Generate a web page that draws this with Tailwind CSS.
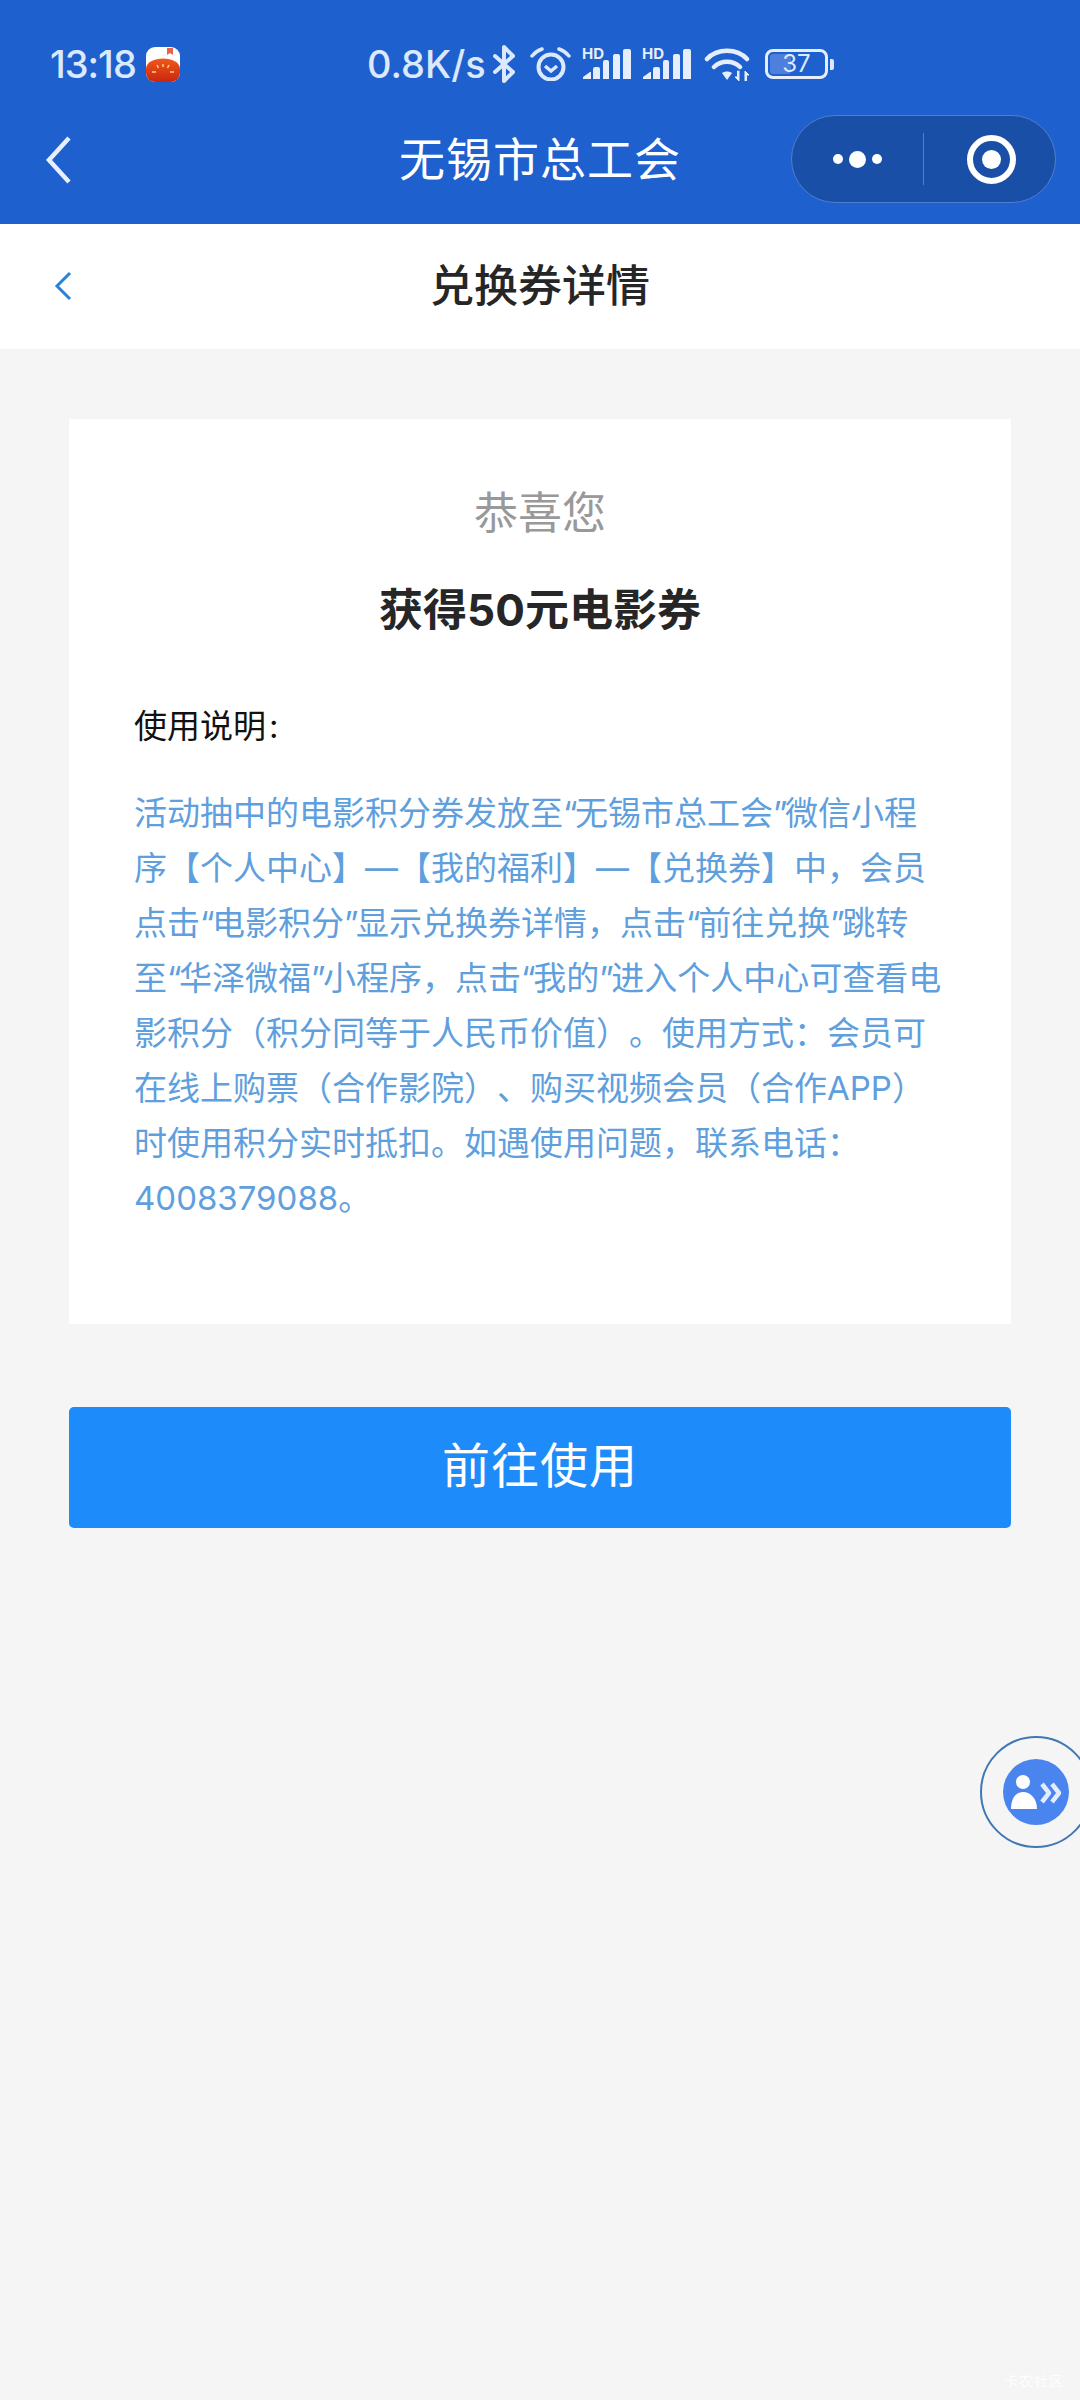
<!DOCTYPE html>
<html lang="zh-CN">
<head>
<meta charset="utf-8">
<script src="https://cdn.jsdelivr.net/npm/@tailwindcss/browser@4"></script>
<title>兑换券详情</title>
</head>
<body class="m-0 bg-[#f5f5f5]">
<div class="relative w-[1080px] h-[2400px] overflow-hidden bg-[#f5f5f5] font-['Inter','Noto_Sans_CJK_SC',sans-serif] [text-spacing-trim:space-all]">
  <div class="h-[224px] bg-[#1f60cf] flex flex-col">
    <div class="h-[112px] pl-[50px] pt-[16px] flex items-center text-[#dce8fb]">
      <span class="text-[38px] leading-none font-medium w-[90px] tracking-[-1px]">13:18</span>
      <svg class="ml-[6px]" width="34" height="35" viewBox="0 0 34 35"><defs><linearGradient id="tomato" x1="0" y1="0" x2="0" y2="1"><stop offset="0" stop-color="#f0591b"/><stop offset="1" stop-color="#c9250f"/></linearGradient></defs><rect width="34" height="35" rx="9" fill="#fff"/><path d="M0 22C0 8 34 8 34 22v4a9 9 0 0 1-9 9H9a9 9 0 0 1-9-9z" fill="url(#tomato)"/><path d="M21 1h6v7l-3-2-3 2z" fill="#e4654a"/><path d="M17 17v3M11 18l1.500 3M23 18l-1.500 3M6 25h4M24 25h4" stroke="#ffd27a" stroke-width="1.500"/></svg>
      <span class="ml-[187px] w-[117px] text-[38px] leading-none font-medium whitespace-nowrap">0.8K/s</span>
      <svg class="ml-[9px]" width="22" height="38" viewBox="0 0 22 38" fill="none" stroke="#dce8fb" stroke-width="4" stroke-linejoin="round" stroke-linecap="round"><path d="M2 11l18 16-9 9V2l9 9L2 27"/></svg>
      <svg class="ml-[15px]" width="41" height="34" viewBox="0 0 41 34" fill="none" stroke="#dce8fb" stroke-width="4"><circle cx="21" cy="20" r="12.500"/><path d="M15 19l6 5 6-5" stroke-width="3.500"/><path d="M2 9Q6 4 12 2M39 9Q35 4 29 2" stroke-width="3.500" stroke-linecap="round"/></svg>
      <svg class="ml-[11px]" width="50" height="38" viewBox="0 0 50 38" fill="#e6eefc"><text x="0" y="14" font-size="15" font-weight="700" font-family="Inter">HD</text><path d="M1 34v-2l7-5h1v7zM11 34V24q0-2 2-2h3q2 0 2 2v10zM21 34V17q0-2 2-2h2q2 0 2 2v17zM31 34V11q0-2 2-2h3q2 0 2 2v23zM41 34V6q0-2 2-2h4q2 0 2 2v28z"/></svg>
      <svg class="ml-[10px]" width="50" height="38" viewBox="0 0 50 38" fill="#e6eefc"><text x="0" y="14" font-size="15" font-weight="700" font-family="Inter">HD</text><path d="M1 34v-2l7-5h1v7zM11 34V24q0-2 2-2h3q2 0 2 2v10zM21 34V17q0-2 2-2h2q2 0 2 2v17zM31 34V11q0-2 2-2h3q2 0 2 2v23zM41 34V6q0-2 2-2h4q2 0 2 2v28z"/></svg>
      <svg class="ml-[12px]" width="46" height="34" viewBox="0 0 46 34" fill="none" stroke="#e6eefc" stroke-width="4.500" stroke-linecap="round"><path d="M3 12C13 1 33 1 43 12M10 20c7-7 19-7 26 0"/><path d="M18 26c3-2 7-2 10 0l-5 7z" fill="#e6eefc" stroke="none"/><path d="M33.500 24v6h-2.500l4 4v-10M42.500 34v-6h2.500l-4-4v10z" fill="#e6eefc" stroke="#e6eefc" stroke-width="1" stroke-linejoin="round"/></svg>
      <div class="relative ml-[15px] w-[63px] h-[30px] border-[3px] border-[#e6eefc] rounded-[8px]">
        <div class="absolute left-[2px] top-[2px] bottom-[2px] w-[21px] bg-[#4d7fdc] rounded-[3px]"></div>
        <span class="absolute inset-0 flex items-center justify-center text-[24px] leading-none text-[#dce8fb]">37</span>
      </div>
      <div class="ml-[2px] w-[4px] h-[11px] bg-[#dce8fb] rounded-r-[2px]"></div>
    </div>
    <div class="relative h-[112px] flex items-center justify-center">
      <svg class="absolute left-[44px] top-[24px]" width="28" height="48" viewBox="0 0 28 48" fill="none" stroke="#e8f0fd" stroke-width="4.500"><path d="M25 2L5 24l20 22"/></svg>
      <span class="text-[46px] leading-none text-white tracking-[1px] -mt-[18px]">无锡市总工会</span>
      <div class="absolute left-[791px] top-[3px] w-[265px] h-[88px] rounded-[44px] bg-[#1a4fa8] border border-[#4d7fd0] flex items-center">
        <div class="w-[131px] flex items-center justify-center gap-[6px]">
          <span class="size-[10px] rounded-full bg-white"></span><span class="size-[17px] rounded-full bg-white"></span><span class="size-[10px] rounded-full bg-white"></span>
        </div>
        <div class="w-px h-[52px] bg-[#4d7fd0]"></div>
        <div class="flex-1 flex items-center justify-center pl-[3px]">
          <div class="size-[49px] rounded-full border-[6px] border-white flex items-center justify-center"><span class="size-[19px] rounded-full bg-white"></span></div>
        </div>
      </div>
    </div>
  </div>

  <header class="relative h-[125px] bg-white flex items-center justify-center">
    <svg class="absolute left-[53px] top-[46px]" width="20" height="32" viewBox="0 0 20 32" fill="none" stroke="#2a82d8" stroke-width="3"><path d="M17 3L4 16l13 13"/></svg>
    <h1 class="text-[44px] leading-none font-medium text-[#262626] -mt-[2px]">兑换券详情</h1>
  </header>

  <main class="px-[69px] pt-[70px]">
    <section class="h-[905px] bg-white px-[65px] pt-[64px]">
      <p class="text-center text-[44px] leading-[60px] text-[#999999]">恭喜您</p>
      <p class="mt-[37px] text-center text-[44px] leading-[60px] font-bold text-[#262626]">获得50元电影券</p>
      <p class="mt-[61px] text-[33px] leading-[50px] text-[#111111]">使用说明<span class="ml-[3px]">:</span></p>
      <p class="mt-[35px] text-[33px] leading-[55px] text-[#5f9fdd] whitespace-nowrap">活动抽中的电影积分券发放至<span class="tracking-[-2.5px]">“</span>无锡市总工会<span class="tracking-[-2.5px]">”</span>微信小程<br>序【个人中心】—【我的福利】—【兑换券】中，会员<br>点击<span class="tracking-[-2.5px]">“</span>电影积分<span class="tracking-[-2.5px]">”</span>显示兑换券详情，点击<span class="tracking-[-2.5px]">“</span>前往兑换<span class="tracking-[-2.5px]">”</span>跳转<br>至<span class="tracking-[-2.5px]">“</span>华泽微福<span class="tracking-[-2.5px]">”</span>小程序，点击<span class="tracking-[-2.5px]">“</span>我的<span class="tracking-[-2.5px]">”</span>进入个人中心可查看电<br>影积分（积分同等于人民币价值）。使用方式：会员可<br>在线上购票（合作影院）、购买视频会员（合作APP）<br>时使用积分实时抵扣。如遇使用问题，联系电话：<br>4008379088。</p>
    </section>
    <button class="mt-[83px] w-full h-[121px] rounded-[5px] bg-[#1e8bfa] text-white text-[48px] leading-none tracking-[1px] pb-[4px]">前往使用</button>
  </main>

  <div class="absolute left-[980px] top-[1736px] w-[112px] h-[112px] rounded-full border-[2px] border-[#3f78b4] flex items-center justify-center">
    <svg width="66" height="66" viewBox="0 0 66 66"><circle cx="33" cy="33" r="33" fill="#4a84ee"/><circle cx="20" cy="23" r="7" fill="#fff"/><path d="M8 50c0-11 5-17 12-17s14 6 14 17z" fill="#fff"/><path d="M39 25l7 9-7 9M49 25l7 9-7 9" fill="none" stroke="#e3ecfc" stroke-width="4.500" stroke-linejoin="round"/></svg>
  </div>
  <span class="absolute right-[16px] bottom-[12px] text-[14px] leading-none text-white/80 tracking-[1px]">卡农社区</span>
</div>
</body>
</html>
